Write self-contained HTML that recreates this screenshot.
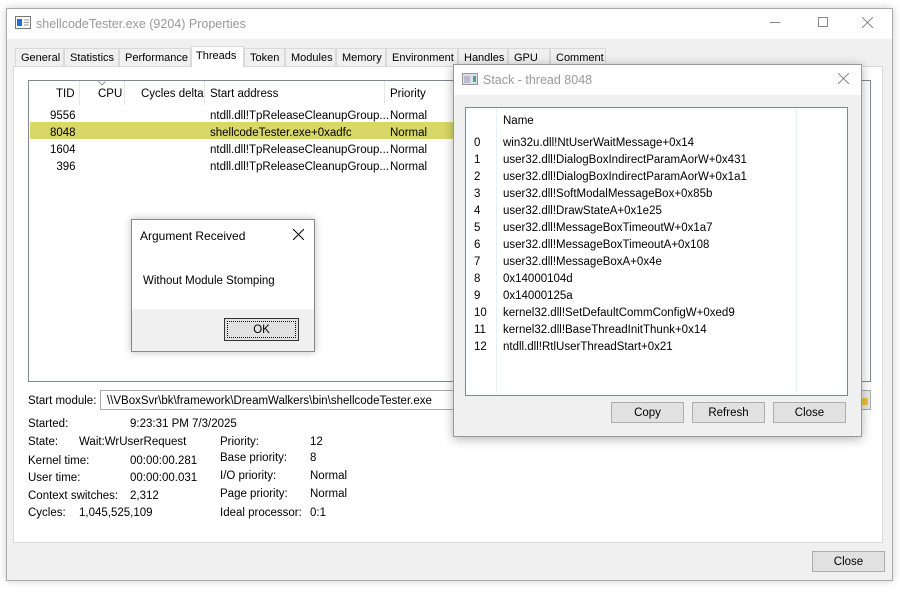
<!DOCTYPE html>
<html><head><style>
*{margin:0;padding:0;box-sizing:border-box}
body{width:900px;height:594px;background:#fff;font-family:"Liberation Sans",sans-serif;font-size:11.5px;color:#000;position:relative;overflow:hidden}
.a{position:absolute;white-space:nowrap}
.btn{position:absolute;background:#e1e1e1;border:1px solid #adadad;text-align:center;line-height:20px}
.tab{position:absolute;top:48px;height:19px;border:1px solid #d9d9d9;border-bottom:none;background:#f0f0f0;line-height:19px;padding-left:5px;font-size:11px}
.t{position:absolute;white-space:nowrap;margin-top:1px}
</style></head><body>
<div class="a" style="left:6px;top:8px;width:887px;height:573px;background:#f0f0f0;border:1px solid #aaa;box-shadow:0 0 8px rgba(0,0,0,.2)"></div>
<div class="a" style="left:7px;top:9px;width:885px;height:30px;background:#fff"></div>
<svg class="a" style="left:15px;top:16px" width="16" height="13"><rect x="0.5" y="0.5" width="15" height="12" fill="#fff" stroke="#777"/><rect x="2" y="3" width="5" height="7" fill="#1e6fd0"/><line x1="9" y1="4" x2="14" y2="4" stroke="#999"/><line x1="9" y1="6.5" x2="14" y2="6.5" stroke="#999"/><line x1="9" y1="9" x2="14" y2="9" stroke="#999"/></svg>
<div class="a" style="left:36px;top:17px;font-size:12.5px;color:#999">shellcodeTester.exe (9204) Properties</div>
<div class="a" style="left:770px;top:22px;width:10px;height:1px;background:#888"></div>
<div class="a" style="left:818px;top:17px;width:10px;height:10px;border:1px solid #888"></div>
<svg class="a" style="left:862px;top:17px" width="11" height="11"><path d="M0 0L11 11M11 0L0 11" stroke="#888" stroke-width="1"/></svg>
<div class="tab" style="left:15px;width:49px">General</div>
<div class="tab" style="left:64px;width:55px">Statistics</div>
<div class="tab" style="left:119px;width:72px">Performance</div>
<div class="tab" style="left:191px;top:46px;height:21px;width:53px;background:#fff;z-index:2;padding-left:4px">Threads</div>
<div class="tab" style="left:244px;width:41px">Token</div>
<div class="tab" style="left:285px;width:51px">Modules</div>
<div class="tab" style="left:336px;width:50px">Memory</div>
<div class="tab" style="left:386px;width:72px">Environment</div>
<div class="tab" style="left:458px;width:50px">Handles</div>
<div class="tab" style="left:508px;width:42px">GPU</div>
<div class="tab" style="left:550px;width:56px">Comment</div>
<div class="a" style="left:13px;top:66px;width:870px;height:477px;background:#fff;border:1px solid #d9d9d9"></div>
<div class="a" style="left:28px;top:80px;width:843px;height:302px;border:1px solid #828790;background:#fff"></div>
<div class="a" style="left:79px;top:81px;width:1px;height:24px;background:#e5e5e5"></div>
<div class="a" style="left:124px;top:81px;width:1px;height:24px;background:#e5e5e5"></div>
<div class="a" style="left:204px;top:81px;width:1px;height:24px;background:#e5e5e5"></div>
<div class="a" style="left:384px;top:81px;width:1px;height:24px;background:#e5e5e5"></div>
<div class="t" style="left:56px;top:87px">TID</div>
<div class="t" style="left:98px;top:87px">CPU</div>
<svg class="a" style="left:98px;top:81px" width="8" height="5"><path d="M0.5 0.5L4 4L7.5 0.5" fill="none" stroke="#999"/></svg>
<div class="t" style="left:141px;top:87px">Cycles delta</div>
<div class="t" style="left:210px;top:87px">Start address</div>
<div class="t" style="left:390px;top:87px">Priority</div>
<div class="a" style="left:30px;top:122px;width:424px;height:17px;background:#d8d866"></div>
<div class="t" style="left:50px;top:107px;line-height:17px">9556<br>8048<br>1604<br>&nbsp;&nbsp;396</div>
<div class="t" style="left:210px;top:107px;line-height:17px">ntdll.dll!TpReleaseCleanupGroup...<br>shellcodeTester.exe+0xadfc<br>ntdll.dll!TpReleaseCleanupGroup...<br>ntdll.dll!TpReleaseCleanupGroup...</div>
<div class="t" style="left:390px;top:107px;line-height:17px">Normal<br>Normal<br>Normal<br>Normal</div>
<div class="t" style="left:28px;top:394px">Start module:</div>
<div class="a" style="left:100px;top:390px;width:770px;height:20px;border:1px solid #aaa;background:#fff;padding:4px 0 0 6px">\\VBoxSvr\bk\framework\DreamWalkers\bin\shellcodeTester.exe</div>
<div class="t" style="left:28px;top:417px">Started:</div><div class="t" style="left:130px;top:417px">9:23:31 PM 7/3/2025</div>
<div class="t" style="left:28px;top:435px">State:</div><div class="t" style="left:79px;top:435px">Wait:WrUserRequest</div>
<div class="t" style="left:28px;top:454px">Kernel time:</div><div class="t" style="left:130px;top:454px">00:00:00.281</div>
<div class="t" style="left:28px;top:471px">User time:</div><div class="t" style="left:130px;top:471px">00:00:00.031</div>
<div class="t" style="left:28px;top:489px">Context switches:</div><div class="t" style="left:130px;top:489px">2,312</div>
<div class="t" style="left:28px;top:506px">Cycles:</div><div class="t" style="left:79px;top:506px">1,045,525,109</div>
<div class="t" style="left:220px;top:435px">Priority:</div><div class="t" style="left:310px;top:435px">12</div>
<div class="t" style="left:220px;top:451px">Base priority:</div><div class="t" style="left:310px;top:451px">8</div>
<div class="t" style="left:220px;top:469px">I/O priority:</div><div class="t" style="left:310px;top:469px">Normal</div>
<div class="t" style="left:220px;top:487px">Page priority:</div><div class="t" style="left:310px;top:487px">Normal</div>
<div class="t" style="left:220px;top:506px">Ideal processor:</div><div class="t" style="left:310px;top:506px">0:1</div>
<div class="a" style="left:855px;top:390px;width:16px;height:20px;border:1px solid #aaa;background:#e8e8e8"></div>
<div class="a" style="left:859px;top:398px;width:9px;height:7px;background:#f0c040"></div>
<div class="btn" style="left:812px;top:551px;width:73px;height:21px">Close</div>
<div class="a" style="left:131px;top:219px;width:184px;height:133px;border:1px solid #888;background:#f0f0f0;box-shadow:0 0 8px rgba(0,0,0,.25)"></div>
<div class="a" style="left:132px;top:220px;width:182px;height:89px;background:#fff"></div>
<div class="a" style="left:140px;top:229px;font-size:12px">Argument Received</div>
<svg class="a" style="left:293px;top:229px" width="11" height="11"><path d="M0 0L11 11M11 0L0 11" stroke="#000" stroke-width="1"/></svg>
<div class="t" style="left:143px;top:274px">Without Module Stomping</div>
<div class="a" style="left:224px;top:318px;width:75px;height:23px;border:1px solid #333;background:#e1e1e1"><div style="margin:2px;height:17px;border:1px dotted #000;text-align:center;line-height:16px">OK</div></div>
<div class="a" style="left:453px;top:64px;width:409px;height:373px;border:1px solid #999;background:#f0f0f0;box-shadow:0 2px 10px rgba(0,0,0,.3)"></div>
<div class="a" style="left:454px;top:65px;width:407px;height:30px;background:#fff"></div>
<svg class="a" style="left:462px;top:73px" width="16" height="12"><rect x="0.5" y="0.5" width="15" height="11" fill="#dde" stroke="#999"/><rect x="2" y="3" width="6" height="7" fill="#bbc"/><rect x="11" y="3" width="3" height="6" fill="#4a8"/></svg>
<div class="a" style="left:483px;top:73px;font-size:12.5px;color:#999">Stack - thread 8048</div>
<svg class="a" style="left:838px;top:73px" width="11" height="11"><path d="M0 0L11 11M11 0L0 11" stroke="#888" stroke-width="1"/></svg>
<div class="a" style="left:465px;top:107px;width:383px;height:289px;border:1px solid #828790;background:#fff"></div>
<div class="a" style="left:496px;top:108px;width:1px;height:286px;background:#eaf0f8"></div>
<div class="a" style="left:796px;top:108px;width:1px;height:286px;background:#eaf0f8"></div>
<div class="t" style="left:503px;top:114px">Name</div>
<div class="t" style="left:474px;top:134px;line-height:17px">0<br>1<br>2<br>3<br>4<br>5<br>6<br>7<br>8<br>9<br>10<br>11<br>12</div>
<div class="t" style="left:503px;top:134px;line-height:17px">win32u.dll!NtUserWaitMessage+0x14<br>user32.dll!DialogBoxIndirectParamAorW+0x431<br>user32.dll!DialogBoxIndirectParamAorW+0x1a1<br>user32.dll!SoftModalMessageBox+0x85b<br>user32.dll!DrawStateA+0x1e25<br>user32.dll!MessageBoxTimeoutW+0x1a7<br>user32.dll!MessageBoxTimeoutA+0x108<br>user32.dll!MessageBoxA+0x4e<br>0x14000104d<br>0x14000125a<br>kernel32.dll!SetDefaultCommConfigW+0xed9<br>kernel32.dll!BaseThreadInitThunk+0x14<br>ntdll.dll!RtlUserThreadStart+0x21</div>
<div class="btn" style="left:611px;top:402px;width:73px;height:21px">Copy</div>
<div class="btn" style="left:692px;top:402px;width:73px;height:21px">Refresh</div>
<div class="btn" style="left:773px;top:402px;width:73px;height:21px">Close</div>
</body></html>
